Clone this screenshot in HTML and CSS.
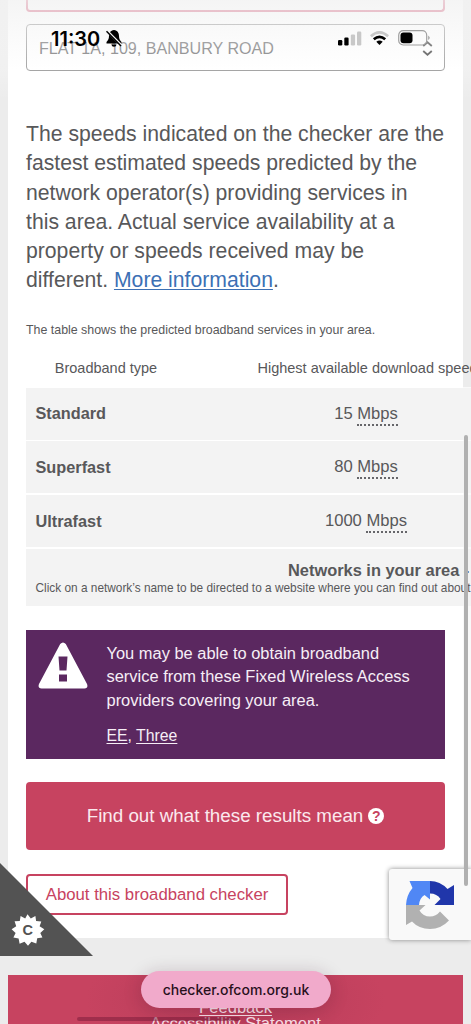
FILE: index.html
```html
<!DOCTYPE html>
<html lang="en">
<head>
<meta charset="utf-8">
<title>Ofcom broadband checker</title>
<link rel="stylesheet" href="styles.css">
</head>
<body>
<main class="card">
  <div class="field-error"></div>
  <div class="select"><span>FLAT 1A, 109, BANBURY ROAD</span>
    <svg class="chevrons" viewBox="0 0 10 14"><path d="M1 4.700 5 1.200l4 3.500M1 9.300 5 12.800l4-3.500"/></svg>
  </div>
  <p class="intro">The speeds indicated on the checker are the<br>fastest estimated speeds predicted by the<br>network operator(s) providing services in<br>this area. Actual service availability at a<br>property or speeds received may be<br>different. <a href="#">More information</a>.</p>
  <p class="caption">The table shows the predicted broadband services in your area.</p>
  <div class="table">
    <div class="row head"><span>Broadband type</span><span>Highest available download speed</span></div>
    <div class="row"><b>Standard</b><span>15 <abbr>Mbps</abbr></span></div>
    <div class="row"><b>Superfast</b><span>80 <abbr>Mbps</abbr></span></div>
    <div class="row"><b>Ultrafast</b><span>1000 <abbr>Mbps</abbr></span></div>
    <div class="networks"><b>Networks in your area -</b><small>Click on a network’s name to be directed to a website where you can find out about</small></div>
  </div>
  <section class="notice">
    <svg class="warning" viewBox="0 0 50 47"><path fill="#fff" fill-rule="evenodd" d="M22.200 2Q25-1 27.800 2L49 42q1.500 4-2.500 4.500h-43Q-.5 46 1 42ZM20.500 14.500l1 14h7l1-14ZM21 32.500v7h8v-7Z"/></svg>
    <div class="notice-text"><p>You may be able to obtain broadband<br>service from these Fixed Wireless Access<br>providers covering your area.</p><p class="providers"><a href="#">EE</a>, <a href="#">Three</a></p></div>
  </section>
  <button class="primary"><span>Find out what these results mean</span><i>?</i></button>
  <button class="outline">About this broadband checker</button>
</main>
<footer class="footer"><a href="#">Feedback</a><a href="#">Accessibility Statement</a></footer>

<div class="haze"></div>
<div class="status">
  <span class="clock">11:30</span>
  <svg class="bell" viewBox="0 0 16 17"><path d="M8 0C4.500 .5 3 3 3 6c0 3-1 4-2.500 6v1.500h15V12c-1.500-2-2.500-3-2.500-6C13 3 11.500 .5 8 0ZM5.500 14.500a2.500 2.200 0 0 0 5 0Z"/><path d="M1 .8 15.500 15.500" stroke="#f5f5f5" stroke-width="2.400"/><path d="M.5 1.300 15 16" stroke="#000" stroke-width="1.500"/></svg>
  <svg class="signal" viewBox="0 0 24 15"><rect y="9" width="4.300" height="5.500" rx="1.200"/><rect x="6.300" y="6.500" width="4.300" height="8" rx="1.200"/><g fill="#c8c8c8"><rect x="12.800" y="3.500" width="4.300" height="11" rx="1.200"/><rect x="19" y=".5" width="4.300" height="14" rx="1.200"/></g></svg>
  <svg class="wifi" viewBox="0 0 19 15"><g fill="none" stroke-width="2.700"><path stroke="#c8c8c8" d="M.9 5.200Q9.500-2.400 18.100 5.200"/><path stroke="#000" d="M3.800 8.300Q9.500 3.300 15.200 8.300"/></g><path d="M6.300 10.700Q9.500 8.200 12.700 10.700L9.500 14Z"/></svg>
  <svg class="battery" viewBox="0 0 33 16"><rect x=".7" y=".7" width="28" height="14.300" rx="4.500" fill="none" stroke="#a0a0a0" stroke-width="1.200"/><rect x="2.500" y="2.400" width="12" height="10.800" rx="3"/><path fill="#a0a0a0" d="M30.200 5.500q3 2.300 0 4.600Z"/></svg>
</div>
<div class="cookie">
  <svg viewBox="0 0 93 93"><path fill="#535353" d="M0 0 93 93H0Z"/><path fill="#fff" d="M27.500 51.200l3.300 4.200 4.600-2.500.7 5.200 5.200.3-1.700 4.900 4.700 3-4 3.600 2.100 4.600-5.200.8-.9 5.200-4.900-1.800-3.400 4-3.500-4-4.900 2-1-5.300-5.200-.8 2.200-4.700-4-3.700 4.600-3-1.600-4.900 5.200-.2.800-5.200 4.600 2.500Z"/><text x="27.700" y="71.900">C</text></svg>
</div>
<div class="captcha">
  <svg viewBox="0 0 48 48"><path fill="#5087f5" d="M24 0v18.500L18.500 14Q13.500 17 13 24H0Q.5 14 6.500 7L3.500 0Z"/><path fill="#2036aa" d="M24 0Q34 0 41.500 8L48 4V24H28.500l6-6Q31 12.500 24 12.500Z"/><path fill="#b1b1b1" d="M0 24h19.500l-6 5.500Q17 35.500 24 35.500q6 0 10-5L43 39.500Q35 48 24 48 13 48 6 40.500L0 44Z"/></svg>
</div>
<div class="scrollbar"></div>
<div class="home-indicator"></div>
<div class="url">checker.ofcom.org.uk</div>
</body>
</html>
```
FILE: styles.css
```css
* { box-sizing: border-box; }
html { overflow: hidden; }
body { margin: 0; width: 471px; height: 1024px; overflow: hidden; position: relative; background: linear-gradient(#f9f9f9, #f9f9f9) right 387px / 8px 482px no-repeat #ececec; color: #58585a; font-family: "Liberation Sans", Arial, sans-serif; }
p { margin: 0; }
a { color: inherit; text-underline-offset: 2px; text-decoration-thickness: 1px; }
.card { display: flex; flex-direction: column; width: 455px; height: 938px; margin-left: 8px; padding: 0 18px; background: #fff; }
.field-error { flex: none; height: 12px; border: 2px solid #d0476a; border-top: 0; border-radius: 0 0 4px 4px; }
.select { flex: none; display: flex; align-items: center; justify-content: space-between; height: 47px; margin-top: 12px; padding: 1px 11px 0 12px; border: 1px solid #888; border-radius: 4px; font-size: 16.100px; }
.chevrons { width: 11px; height: 15px; fill: none; stroke: #222; stroke-width: 1.700; }
.intro { margin-top: 48px; font-size: 21.200px; line-height: 29.300px; white-space: nowrap; }
.intro a { color: #3c70b4; }
.caption { margin-top: 26px; font-size: 12.400px; line-height: 18px; white-space: nowrap; }
.table { flex: none; width: 520px; margin-top: 9px; display: flex; flex-direction: column; gap: 1.500px; }
.row { display: grid; grid-template-columns: 160px 360px; align-items: center; height: 52.100px; background: #f3f3f3; font-size: 16.600px; white-space: nowrap; }
.row b { padding-left: 9.500px; font-size: 16.300px; }
.row span { text-align: center; }
.row.head { height: 38.500px; padding-top: 1px; background: none; font-size: 14.500px; }
.row.head span + span { padding-left: 3px; }
abbr { padding-bottom: 1px; border-bottom: 2px dotted #66666a; }
.networks { display: flex; flex-direction: column; height: 57px; padding: 11px 0 0 9.500px; background: #f3f3f3; white-space: nowrap; }
.networks b { margin-left: 252.500px; font-size: 16.400px; line-height: 20px; }
.networks small { font-size: 11.850px; line-height: 17px; }
.notice { flex: none; display: flex; gap: 19px; height: 129px; margin-top: 24px; padding: 12px 11.500px; background: #5b2860; color: #f6eef6; }
.warning { width: 50px; height: 47px; }
.notice-text { font-size: 16.450px; line-height: 23.500px; white-space: nowrap; }
.notice-text .providers { margin-top: 12px; font-size: 15.800px; }
button { flex: none; font-family: inherit; white-space: nowrap; }
.primary { display: flex; align-items: center; justify-content: center; gap: 5px; height: 68px; margin-top: 23px; padding: 0; border: 0; border-radius: 4px; background: #c74360; color: #fbe9ee; font-size: 18.800px; }
.primary i { width: 16px; height: 16px; border-radius: 50%; background: #fff; color: #c74360; font: bold 14px/16px "Liberation Sans", Arial, sans-serif; }
.outline { width: 262px; height: 41px; margin-top: 24px; padding: 1px 0 0; border: 2px solid #c74360; border-radius: 4px; background: #fff; color: #c74360; font-size: 16.750px; }
.footer { display: flex; flex-direction: column; align-items: center; height: 49px; margin: 37px 8px 0; padding-top: 25px; background: radial-gradient(ellipse 150px 60px at center, #b53c59, #c74360); color: #f8dfe7; font-size: 16.600px; line-height: 16px; }
.haze { position: absolute; inset: 0 0 auto; height: 100px; background: linear-gradient(rgba(242,242,242,.8), rgba(248,248,248,.45) 45px, rgba(255,255,255,.25) 70px, rgba(255,255,255,0)); }
.status { position: absolute; inset: 0 0 auto; height: 60px; }
.status > * { position: absolute; }
.clock { left: 51px; top: 27px; color: #000; font: 600 20px/24px Inter, sans-serif; letter-spacing: 0; }
.bell { left: 106px; top: 30px; width: 16px; height: 17px; }
.signal { left: 338px; top: 31px; width: 24px; height: 15px; }
.wifi { left: 370px; top: 31px; width: 19px; height: 15px; }
.battery { left: 398px; top: 30px; width: 33px; height: 16px; }
.scrollbar { position: absolute; left: 464px; top: 435px; width: 3.500px; height: 451px; border-radius: 2px; background: #b0b0b0; }
.cookie { position: absolute; left: 0; top: 863px; width: 93px; height: 93px; }
.cookie svg { display: block; width: 93px; height: 93px; }
.cookie text { fill: #535353; font: 900 14.500px "Liberation Sans", Arial, sans-serif; text-anchor: middle; }
.captcha { position: absolute; left: 389px; top: 869px; width: 82px; height: 71px; padding: 12px 17px; border-radius: 3px 0 0 3px; background: #f9f9f9; box-shadow: 0 0 5px #888; }
.captcha svg { display: block; width: 48px; height: 48px; }
.home-indicator { position: absolute; left: 77px; top: 1017px; width: 163px; height: 4px; border-radius: 2px; background: rgba(120,25,55,.5); }
.url { position: absolute; left: 141px; top: 971px; width: 190px; height: 37px; border-radius: 19px; background: #f1aacb; box-shadow: 0 2px 18px rgba(60,20,40,.22); color: #28101c; font: 500 14px/37px Inter, sans-serif; text-align: center; }
```
